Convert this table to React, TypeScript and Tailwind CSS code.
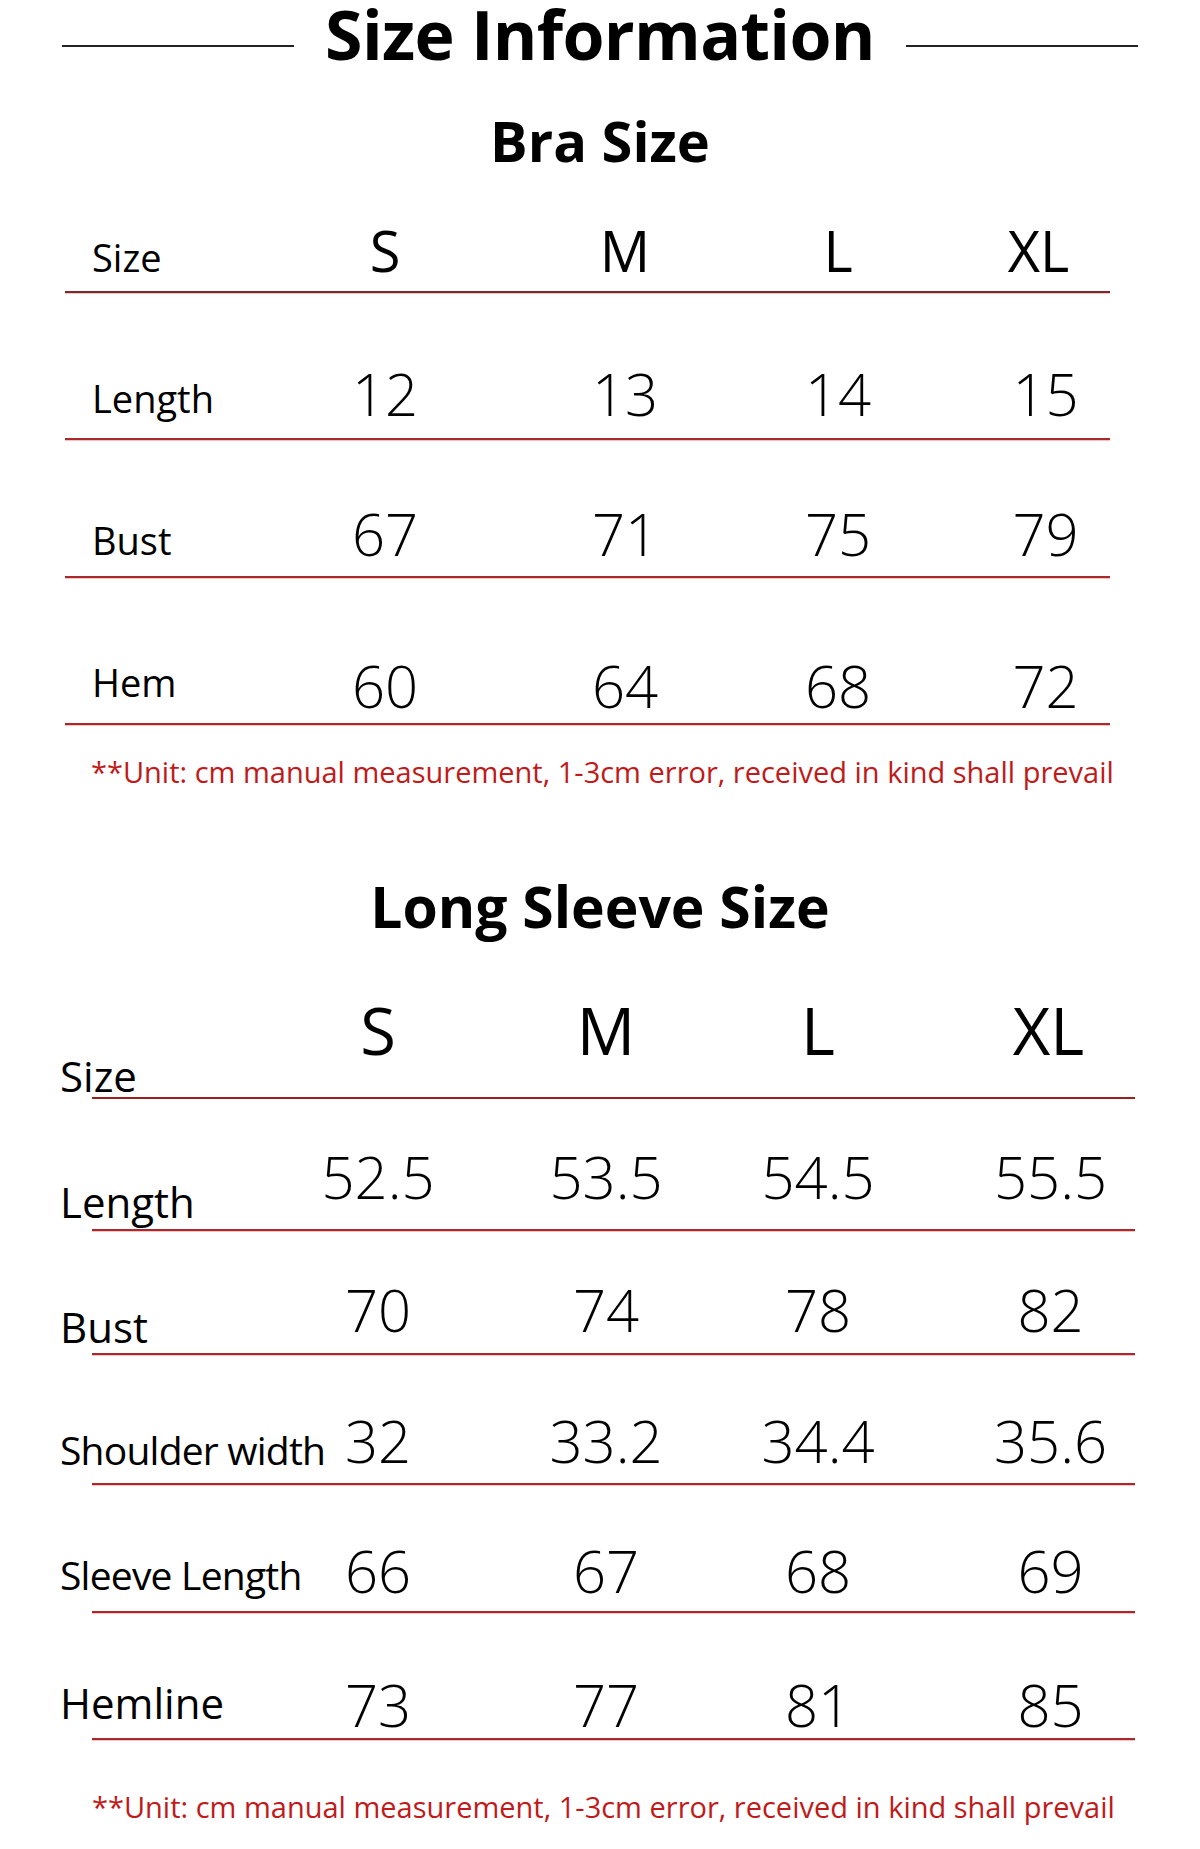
// Size chart: bra + long sleeve measurements

const font = { fontFamily: '"Open Sans", "Liberation Sans", sans-serif' };

const braRows = [
  { label: 'Length', values: ['12', '13', '14', '15'], h: 'h-[147px]', lpb: 'pb-[21px]', vpb: 'pb-[15px]' },
  { label: 'Bust', values: ['67', '71', '75', '79'], h: 'h-[138px]', lpb: 'pb-[17px]', vpb: 'pb-[13px]' },
  { label: 'Hem', values: ['60', '64', '68', '72'], h: 'h-[147px]', lpb: 'pb-[22px]', vpb: 'pb-[8px]' },
];

const sleeveRows = [
  { label: 'Length', values: ['52.5', '53.5', '54.5', '55.5'], h: 'h-[132px]', lcls: 'text-[42px] pb-[6px]', vpb: 'pb-[23px]' },
  { label: 'Bust', values: ['70', '74', '78', '82'], h: 'h-[124px]', lcls: 'text-[42px] pb-[5px]', vpb: 'pb-[14px]' },
  { label: 'Shoulder width', values: ['32', '33.2', '34.4', '35.6'], h: 'h-[130px]', lcls: 'text-[39px] tracking-[-0.02em] pb-[14px]', vpb: 'pb-[13px]' },
  { label: 'Sleeve Length', values: ['66', '67', '68', '69'], h: 'h-[128px]', lcls: 'text-[39px] tracking-[-0.02em] pb-[17px]', vpb: 'pb-[11px]' },
  { label: 'Hemline', values: ['73', '77', '81', '85'], h: 'h-[127px]', lcls: 'text-[42px] font-medium pb-[14px]', vpb: 'pb-[4px]' },
];

const sizes = ['S', 'M', 'L', 'XL'];

function Note({ className }: { className: string }) {
  return (
    <p className={`text-[29px] leading-none text-[#c01a1a] whitespace-nowrap ${className}`}>
      **Unit: cm manual measurement, 1-3cm error, received in kind shall prevail
    </p>
  );
}

export default function App() {
  return (
    <div className="w-[1200px] h-[1849px] bg-white text-black overflow-hidden" style={font}>
      {/* Header */}
      <div className="grid grid-cols-[232px_1fr_232px] px-[62px] h-[68px]">
        <div className="mt-[45px] h-[2px] bg-[#222]" />
        <h1 className="text-center text-[68px] font-bold leading-none tracking-[-0.01em]">
          Size Information
        </h1>
        <div className="mt-[45px] h-[2px] bg-[#222]" />
      </div>

      {/* Bra table */}
      <h2 className="mt-[44px] text-center text-[56px] font-bold leading-none">Bra Size</h2>
      <div className="ml-[65px] w-[1045px]">
        <div className="grid grid-cols-[200px_240px_240px_186px_1fr] items-end h-[125px] border-b-[2px] border-[#7a2a2a] shadow-[0_1px_0_#f2c4c4]">
          <span className="pl-[27px] text-[38px] leading-none pb-[15px]">Size</span>
          {sizes.map((s, i) => (
            <span key={s} className={`text-center text-[56px] leading-none pb-[13px] ${i === 3 ? 'pl-[36px]' : ''}`}>
              {s}
            </span>
          ))}
        </div>
        {braRows.map((r) => (
          <div
            key={r.label}
            className={`grid grid-cols-[200px_240px_240px_186px_1fr] items-end ${r.h} border-b-[2px] border-[#a92a2c] shadow-[0_1px_0_#f5c0c0]`}
          >
            <span className={`pl-[27px] text-[38px] leading-none ${r.lpb}`}>{r.label}</span>
            {r.values.map((v, i) => (
              <span key={i} className={`text-center text-[58px] font-light leading-none ${r.vpb} ${i === 3 ? 'pl-[50px]' : ''}`}>
                {v}
              </span>
            ))}
          </div>
        ))}
      </div>
      <Note className="mt-[32px] ml-[91px]" />

      {/* Long sleeve table */}
      <h2 className="mt-[92px] text-center text-[57px] font-bold leading-none">Long Sleeve Size</h2>
      <div className="ml-[92px] w-[1043px]">
        <div className="grid grid-cols-[176px_220px_236px_188px_1fr] items-end h-[164px] border-b-[2px] border-[#9c1f1f]">
          <span className="-ml-[32px] text-[42px] leading-none">Size</span>
          {sizes.map((s, i) => (
            <span key={s} className={`text-center text-[65px] leading-none pb-[34px] ${i === 3 ? 'pl-[50px]' : ''}`}>
              {s}
            </span>
          ))}
        </div>
        {sleeveRows.map((r) => (
          <div
            key={r.label}
            className={`grid grid-cols-[176px_220px_236px_188px_1fr] items-end ${r.h} border-b-[2px] border-[#a92a2c] shadow-[0_1px_0_#f5c0c0]`}
          >
            <span className={`-ml-[32px] whitespace-nowrap leading-none ${r.lcls}`}>{r.label}</span>
            {r.values.map((v, i) => (
              <span key={i} className={`text-center text-[58px] font-light leading-none ${r.vpb} ${i === 3 ? 'pl-[54px]' : ''}`}>
                {v}
              </span>
            ))}
          </div>
        ))}
      </div>
      <Note className="mt-[52px] ml-[92px]" />
    </div>
  );
}
